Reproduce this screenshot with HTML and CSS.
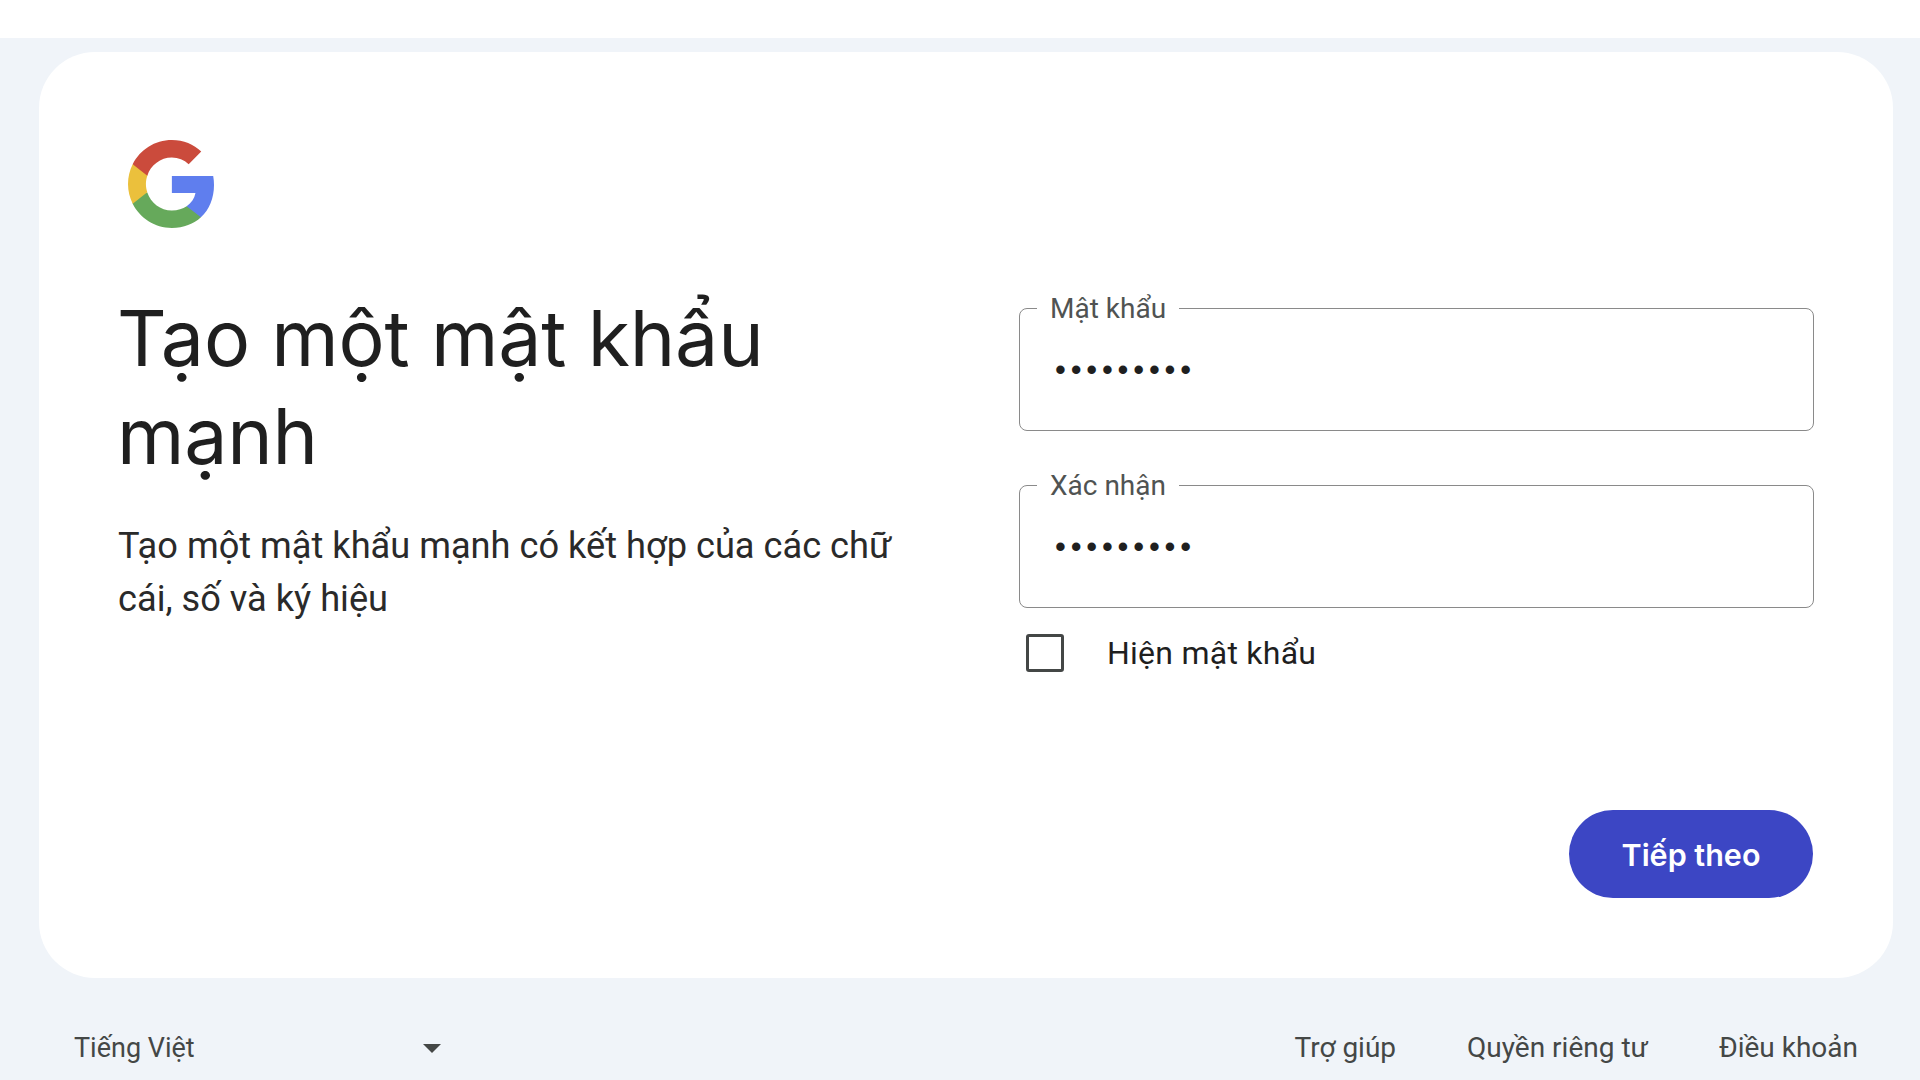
FILE: index.html
```html
<!DOCTYPE html>
<html lang="vi">
<head>
    <meta charset="UTF-8">
    <title>Tạo một mật khẩu mạnh</title>
    <link rel="stylesheet" href="styles.css">
</head>
<body>
    <div class="top-band"></div>
    <main class="card">
        <svg class="logo" viewBox="1 1 21.56 22" aria-label="Google">
            <path fill="#5f7eee" d="M22.56 12.25c0-.78-.07-1.53-.2-2.25H12v4.26h5.92c-.26 1.37-1.04 2.53-2.21 3.31v2.77h3.57c2.08-1.92 3.28-4.74 3.28-8.09z"/>
            <path fill="#66a95b" d="M12 23c2.97 0 5.46-.98 7.28-2.66l-3.57-2.77c-.98.66-2.23 1.06-3.71 1.06-2.86 0-5.29-1.93-6.16-4.53H2.18v2.84C3.99 20.53 7.7 23 12 23z"/>
            <path fill="#ebc03c" d="M5.84 14.09c-.22-.66-.35-1.36-.35-2.09s.13-1.43.35-2.09V7.07H2.18C1.43 8.55 1 10.22 1 12s.43 3.45 1.18 4.93l2.85-2.22.81-.62z"/>
            <path fill="#cb4b3c" d="M12 5.38c1.62 0 3.06.56 4.21 1.64l3.15-3.15C17.45 2.09 14.97 1 12 1 7.7 1 3.99 3.47 2.18 7.07l3.66 2.84c.87-2.6 3.3-4.53 6.16-4.53z"/>
        </svg>
        <div class="card-body">
            <section class="intro">
                <h1>Tạo một mật khẩu mạnh</h1>
                <p>Tạo một mật khẩu mạnh có kết hợp của các chữ cái, số và ký hiệu</p>
            </section>
            <form class="form">
                <fieldset class="field">
                    <legend>Mật khẩu</legend>
                    <input type="password" value="123456789">
                </fieldset>
                <fieldset class="field">
                    <legend>Xác nhận</legend>
                    <input type="password" value="123456789">
                </fieldset>
                <label class="show-pass">
                    <span class="box"></span>
                    Hiện mật khẩu
                </label>
                <div class="actions">
                    <button type="button">Tiếp theo</button>
                </div>
            </form>
        </div>
    </main>
    <footer class="footer">
        <div class="lang">
            <span>Tiếng Việt</span>
            <span class="caret"></span>
        </div>
        <nav class="links">
            <a href="#">Trợ giúp</a>
            <a href="#">Quyền riêng tư</a>
            <a href="#">Điều khoản</a>
        </nav>
    </footer>
</body>
</html>
```

FILE: styles.css
```css
html, body {
    height: 100%;
}
body {
    margin: 0;
    overflow: hidden;
    background: #f0f4f9;
    color: #1f1f1f;
    font-family: Roboto, "Noto Sans", sans-serif;
}
.top-band {
    height: 38px;
    background: #fff;
}
.card {
    box-sizing: border-box;
    height: 926px;
    margin: 14px 27px 0 39px;
    padding: 88px 79px 0;
    background: #fff;
    border-radius: 56px;
}
.logo {
    display: block;
    width: 86px;
    height: 88px;
    margin-left: 10px;
}
.card-body {
    display: grid;
    grid-template-columns: 901px 795px;
    margin-top: 61px;
}
.intro h1 {
    margin: 0 0 0 -1px;
    width: 780px;
    font-family: Inter, sans-serif;
    font-size: 77px;
    font-weight: 400;
    line-height: 98px;
    letter-spacing: -.2px;
}
.intro p {
    margin: 34px 0 0;
    width: 790px;
    font-size: 36.2px;
    line-height: 53px;
    color: #2a2a2a;
}
.field {
    box-sizing: border-box;
    height: 139px;
    margin: 3px 0 38px;
    padding: 0;
    border: 1.5px solid #8a8a8a;
    border-radius: 8px;
}
.field legend {
    margin-left: 17px;
    padding: 2px 13px 0;
    font-size: 28px;
    line-height: 30px;
    color: #505352;
}
.field input {
    display: block;
    box-sizing: border-box;
    width: 100%;
    height: 91px;
    padding: 0 0 0 35px;
    border: 0;
    outline: 0;
    background: none;
    font-size: 31px;
    letter-spacing: 4.8px;
    color: #1f1f1f;
}
.show-pass {
    display: flex;
    align-items: center;
    gap: 43px;
    margin: -13px 0 0 7px;
    font-size: 32px;
    line-height: 40px;
    letter-spacing: .25px;
}
.box {
    box-sizing: border-box;
    width: 38px;
    height: 38px;
    border: 3.5px solid #444746;
    border-radius: 3px;
}
.actions {
    display: flex;
    justify-content: flex-end;
    margin: 137px 1px 0 0;
}
button {
    width: 244px;
    height: 88px;
    border: none;
    border-radius: 44px;
    background: #3c46c4;
    color: #fff;
    font-family: Inter, sans-serif;
    font-size: 30.5px;
    font-weight: 600;
}
.footer {
    display: flex;
    justify-content: space-between;
    align-items: center;
    margin: 50px 0 0;
    padding: 0 62px 0 74px;
    font-size: 27px;
    line-height: 40px;
    color: #444746;
}
.lang {
    display: flex;
    align-items: center;
    justify-content: space-between;
    width: 367px;
}
.caret {
    width: 0;
    height: 0;
    border-left: 9px solid transparent;
    border-right: 9px solid transparent;
    border-top: 9px solid #444746;
}
.links {
    display: flex;
    gap: 71px;
    font-size: 28px;
}
.links a {
    color: #444746;
    text-decoration: none;
}
```
